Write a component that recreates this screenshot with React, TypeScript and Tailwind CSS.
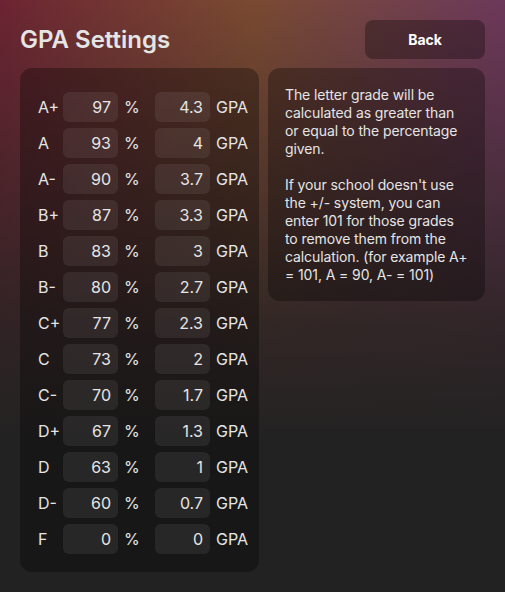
import { useState } from 'react'

type Row = { letter: string; pct: string; gpa: string }

const initialRows: Row[] = [
  { letter: 'A+', pct: '97', gpa: '4.3' },
  { letter: 'A', pct: '93', gpa: '4' },
  { letter: 'A-', pct: '90', gpa: '3.7' },
  { letter: 'B+', pct: '87', gpa: '3.3' },
  { letter: 'B', pct: '83', gpa: '3' },
  { letter: 'B-', pct: '80', gpa: '2.7' },
  { letter: 'C+', pct: '77', gpa: '2.3' },
  { letter: 'C', pct: '73', gpa: '2' },
  { letter: 'C-', pct: '70', gpa: '1.7' },
  { letter: 'D+', pct: '67', gpa: '1.3' },
  { letter: 'D', pct: '63', gpa: '1' },
  { letter: 'D-', pct: '60', gpa: '0.7' },
  { letter: 'F', pct: '0', gpa: '0' },
]

export default function App() {
  const [rows, setRows] = useState<Row[]>(initialRows)

  function update(i: number, key: 'pct' | 'gpa', value: string) {
    setRows(prev => prev.map((r, j) => (j === i ? { ...r, [key]: value } : r)))
  }

  return (
    <div className="min-h-screen bg-gradient-to-r from-[#6c2432] via-[#7a4a31] to-[#6d385a] font-['Inter','Noto_Sans',sans-serif] text-neutral-200">
      <div className="min-h-screen bg-gradient-to-b from-transparent via-[#2a2323]/90 via-55% to-[#222222] to-75% p-5">
        {/* Header */}
        <div className="flex items-center justify-between">
          <h1 className="text-[24px] font-semibold text-neutral-200">GPA Settings</h1>
          <button className="w-[120px] h-[39px] rounded-lg bg-black/30 text-sm font-bold text-white">
            Back
          </button>
        </div>

        <div className="mt-[9px] flex items-start gap-[9px]">
          {/* Grade table */}
          <div className="w-[239px] shrink-0 rounded-xl bg-black/30 pl-[18px] pr-[6px] pt-6 pb-[18px] flex flex-col gap-[6px]">
            {rows.map((r, i) => (
              <div key={r.letter} className="flex items-center h-[30px] text-base">
                <span className="w-[25px] shrink-0">{r.letter}</span>
                <input
                  value={r.pct}
                  onChange={e => update(i, 'pct', e.target.value)}
                  className="w-[55px] shrink-0 h-[30px] rounded-md bg-white/[0.07] pr-[7px] text-right text-neutral-200 outline-none"
                />
                <span className="ml-[6px] w-[31px] shrink-0">%</span>
                <input
                  value={r.gpa}
                  onChange={e => update(i, 'gpa', e.target.value)}
                  className="w-[55px] shrink-0 h-[30px] rounded-md bg-white/[0.07] pr-[7px] text-right text-neutral-200 outline-none"
                />
                <span className="ml-[6px] shrink-0">GPA</span>
              </div>
            ))}
          </div>

          {/* Info */}
          <div className="flex-1 rounded-xl bg-black/30 pl-[17px] pr-[16px] pt-[18px] pb-[17px] text-sm leading-[18px] tracking-[-0.1px]">
            <p>The letter grade will be calculated as greater than or equal to the percentage given.</p>
            <br />
            <p>
              If your school doesn't use the +/- system, you can enter 101 for those grades to remove them from the
              calculation. (for example A+ = 101, A = 90, A- = 101)
            </p>
          </div>
        </div>
      </div>
    </div>
  )
}
